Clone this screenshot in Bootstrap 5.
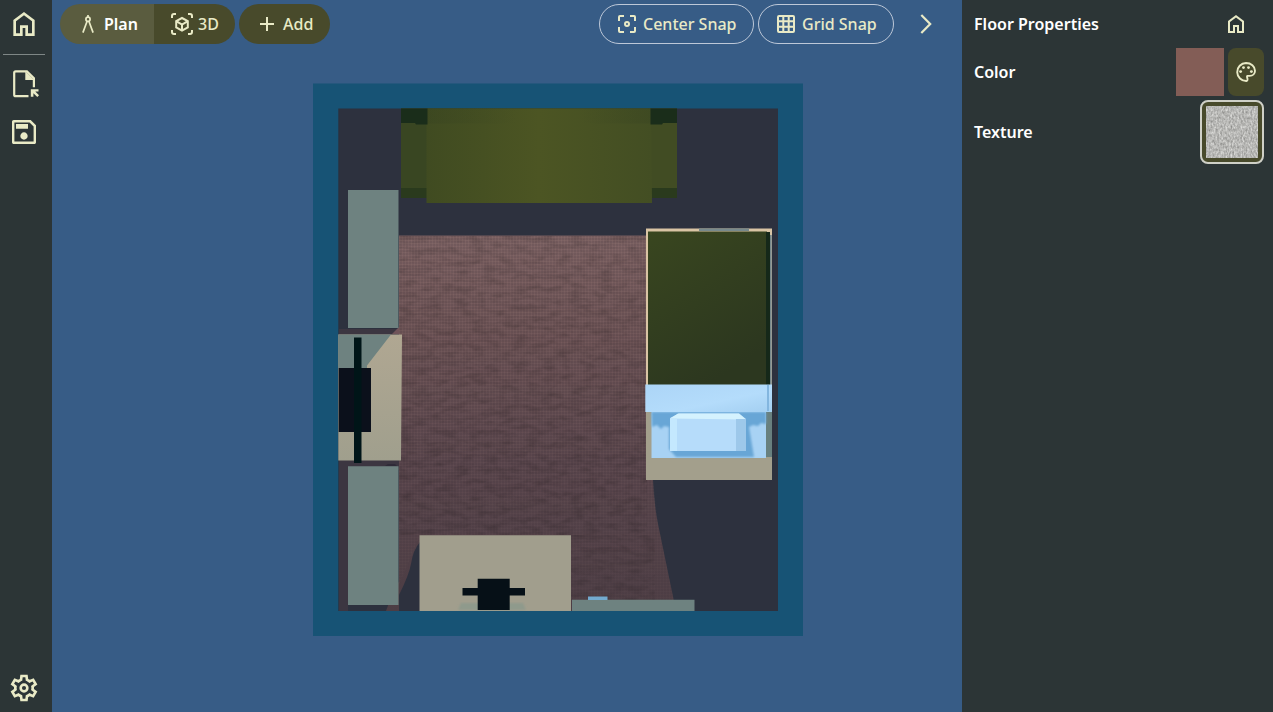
<!DOCTYPE html>
<html lang="en">
<head>
<meta charset="utf-8">
<meta name="viewport" content="width=device-width, initial-scale=1">
<title>Room Planner</title>
<link href="https://cdn.jsdelivr.net/npm/bootstrap@5.3.0/dist/css/bootstrap.min.css" rel="stylesheet">
<style>
  body { font-family: "Noto Sans", "Open Sans", sans-serif; font-size: 16px; font-weight: 500; background: #2c3536; color: #fff; }
  svg { display: block; flex: none; }
  .ic { width: 24px; height: 24px; fill: currentColor; }
  .ic-line { fill: none; stroke: currentColor; stroke-width: 2; }
  .ic-lg { width: 32px; height: 32px; }
  .rail { width: 52px; background: #2c3536; padding: 8px 4px 8px 4px; }
  .rail, .prop-panel { color: #e9eac6; }
  .rail-rule { width: 42px; height: 1px; background: #7f8786; margin: 14px 0 13px -1px; }
  .rail-btn { width: 40px; padding: 0; border: 0; height: 32px; color: #e9eac6; background: none; display: flex; justify-content: center; }
  .stage { background: #375c86; }
  .topbar { height: 48px; padding: 4px 0 4px 8px; }
  .pill { height: 40px; border: 0; border-radius: 20px; padding: 0 16px; color: #e9eac6; background: #484a2b; font-weight: 500; display: flex; align-items: center; gap: 8px; line-height: 24px; white-space: nowrap; }
  .pill-l { border-radius: 20px 0 0 20px; background: #5a5c3f; color: #fff; width: 94px; gap: 4px; font-weight: 600; }
  .pill-l svg { color: #e9eac6; }
  .pill-r { border-radius: 0 20px 20px 0; width: 81px; gap: 4px; }
  .pill-add { width: 91px; margin-left: 4px; gap: 4px; }
  .pill-out { background: none; border: 1px solid #bdc8d8; padding: 0 15px; gap: 4px; }
  .prop-panel { width: 311px; background: #2c3536; padding: 0 9px 0 12px; font-weight: 600; }
  .prop-row { height: 48px; }
  .prop-row span { color: #fff; }
  .swatch { width: 48px; height: 48px; background: #835d56; }
  .pal { width: 36px; height: 48px; border: 0; border-radius: 8px; background: #484a2b; color: #e9eac6; padding: 0 6px; }
  .tex { width: 64px; height: 64px; border: 2px solid #cfd0c7; border-radius: 8px; background: #484a2b; padding: 4px; }
</style>
</head>
<body class="vh-100 overflow-hidden d-flex">
<nav class="rail d-flex flex-column">
  <button class="rail-btn" aria-label="Home"><svg class="ic ic-lg" viewBox="0 -960 960 960"><path d="M240-200h120v-240h240v240h120v-360L480-740 240-560v360Zm-80 80v-480l320-240 320 240v480H520v-240h-80v240H160Z"/></svg></button>
  <div class="rail-rule"></div>
  <button class="rail-btn" aria-label="Open"><svg class="ic ic-lg" viewBox="0 0 32 32"><path fill="none" stroke="currentColor" stroke-width="2.2" d="M20.500 28.200H7.700a1.500 1.500 0 0 1-1.500-1.500V4.800a1.500 1.500 0 0 1 1.500-1.500h11.200l7 7v9"/><path d="M17.300 3v9h9zM22.800 21.300h7.700v2.300h-3.200l3.700 3.700-1.700 1.700-3.900-3.800v3.600h-2.600z"/></svg></button>
  <button class="rail-btn mt-3" aria-label="Save"><svg class="ic ic-lg" viewBox="0 -960 960 960"><path d="M840-680v510q0 20-15 35t-35 15H170q-20 0-35-15t-15-35v-620q0-20 15-35t35-15h510l160 160Zm-72 34L646-768H192v576h576v-454ZM480-250q46 0 78-32t32-78q0-46-32-78t-78-32q-46 0-78 32t-32 78q0 46 32 78t78 32ZM240-580h360v-140H240v140Z"/></svg></button>
  <button class="rail-btn mt-auto" aria-label="Settings"><svg class="ic ic-lg" viewBox="0 -960 960 960"><path d="m370-80-16-128q-13-5-24.5-12T307-235l-119 50L78-375l103-78q-1-7-1-13.5v-27q0-6.5 1-13.5L78-585l110-190 119 50q11-8 23-15t24-12l16-128h220l16 128q13 5 24.5 12t22.5 15l119-50 110 190-103 78q1 7 1 13.5v27q0 6.5-2 13.5l103 78-110 190-118-50q-11 8-23 15t-24 12L590-80H370Zm70-80h79l14-106q31-8 57.500-23.500T639-327l99 41 39-68-86-65q5-14 7-29.500t2-31.500q0-16-2-31.500t-7-29.500l86-65-39-68-99 42q-22-23-48.500-38.500T533-694l-13-106h-79l-14 106q-31 8-57.500 23.500T321-633l-99-41-39 68 86 64q-5 15-7 30t-2 32q0 16 2 31t7 30l-86 65 39 68 99-42q22 23 48.500 38.500T427-266l13 106Z"/><circle cx="480" cy="-480" r="100" fill="none" stroke="currentColor" stroke-width="78"/></svg></button>
</nav>

<main class="stage flex-grow-1 d-flex flex-column">
  <header class="topbar d-flex align-items-center">
    <button class="pill pill-l"><svg class="ic ic-line" viewBox="0 0 24 24" style="stroke-width:1.7"><circle cx="12" cy="7.2" r="2.1"/><path d="M12 3v2.300M11.100 9.200 6.900 20.600M12.900 9.200l4.200 11.400"/></svg><span>Plan</span></button>
    <button class="pill pill-r"><svg class="ic ic-line" viewBox="0 0 24 24"><path d="M2 6V4a2 2 0 0 1 2-2h2M18 2h2a2 2 0 0 1 2 2v2M22 18v2a2 2 0 0 1-2 2h-2M6 22H4a2 2 0 0 1-2-2v-2M12 6l5.800 3.200v6.200L12 18.700l-5.800-3.300V9.200zM6.200 9.200 12 12.500l5.800-3.300M12 12.500v6.200"/></svg><span>3D</span></button>
    <button class="pill pill-add"><svg class="ic ic-line" viewBox="0 0 24 24"><path d="M12 5v14M5 12h14"/></svg><span>Add</span></button>
    <button class="pill pill-out ms-auto me-1" style="width:155px"><svg class="ic ic-line" viewBox="0 0 24 24"><circle cx="12" cy="12" r="2"/><path d="M4 9V5a1 1 0 0 1 1-1h4M15 4h4a1 1 0 0 1 1 1v4M20 15v4a1 1 0 0 1-1 1h-4M9 20H5a1 1 0 0 1-1-1v-4"/></svg><span>Center Snap</span></button>
    <button class="pill pill-out" style="width:136px"><svg class="ic ic-line" viewBox="0 0 24 24"><rect x="4" y="4" width="16" height="16" rx="1"/><path d="M9.300 4v16M14.700 4v16M4 9.300h16M4 14.700h16"/></svg><span>Grid Snap</span></button>
    <button class="btn border-0 p-0" aria-label="More" style="margin:0 24px 0 20px;color:#e9eac6"><svg class="ic" viewBox="0 0 24 24"><path fill="none" stroke="currentColor" stroke-width="2.2" d="M7.300 3l8.900 9-8.900 9"/></svg></button>
  </header>

  <svg width="910" height="664" viewBox="52 48 910 664" role="img" aria-label="Floor plan">
    <defs>
      <linearGradient id="rug" x1="0" y1="0" x2="0" y2="1"><stop offset="0" stop-color="#745b5d"/><stop offset=".25" stop-color="#674f52"/><stop offset=".6" stop-color="#56434a"/><stop offset="1" stop-color="#4c3d44"/></linearGradient>
      <linearGradient id="sofa"><stop offset="0" stop-color="#404b21"/><stop offset=".5" stop-color="#4c5523"/><stop offset="1" stop-color="#434e23"/></linearGradient>
      <linearGradient id="blanket" x1="0" y1="0" x2=".5" y2="1"><stop offset="0" stop-color="#39461f"/><stop offset="1" stop-color="#2c371f"/></linearGradient>
      <linearGradient id="desk" x1="0" y1="0" x2="0" y2="1"><stop offset="0" stop-color="#b0a792"/><stop offset="1" stop-color="#a09f8d"/></linearGradient>
      <linearGradient id="sheet" x1="0" y1="0" x2="1" y2="1"><stop offset="0" stop-color="#acd5f7"/><stop offset=".6" stop-color="#b4dcfb"/><stop offset="1" stop-color="#a3cff1"/></linearGradient>
      <linearGradient id="armTop" x1="0" x2="1"><stop offset="0" stop-color="#344020" stop-opacity=".3"/><stop offset="1" stop-color="#344020" stop-opacity="0"/></linearGradient>
      <linearGradient id="armTopR" x1="1" x2="0"><stop offset="0" stop-color="#344020" stop-opacity=".3"/><stop offset="1" stop-color="#344020" stop-opacity="0"/></linearGradient>
      <filter id="weave" x="0" y="0" width="100%" height="100%"><feTurbulence type="fractalNoise" baseFrequency=".07 .16" numOctaves="3" seed="5"/><feColorMatrix values="0 0 0 0 0  0 0 0 0 0  0 0 0 0 0  1.8 0 0 0 -.72"/></filter>
      <pattern id="thread" width="3" height="3" patternUnits="userSpaceOnUse"><path d="M0 .5h3M.5 0v3" stroke="#c39c98" stroke-opacity=".1"/></pattern>
      <linearGradient id="fade" x1="0" y1="0" x2="0" y2="1"><stop offset="0" stop-color="#fff"/><stop offset="1" stop-color="#333"/></linearGradient>
      <mask id="fadeMask"><rect x="338" y="230" width="340" height="381" fill="url(#fade)"/></mask>
      <filter id="soft"><feGaussianBlur stdDeviation=".9"/></filter>
    </defs>
    <!-- walls and shaded floor -->
    <path fill="#175375" d="M313 83.500h490V636H313z"/>
    <path fill="#2d313e" d="M338.300 108.500H778V611H338.300z"/>
    <!-- lit floor -->
    <path fill="#453944" d="M339 329h62v141h-53v141h-9z" opacity=".65"/>
    <path fill="url(#rug)" d="M399 235.500h248V480h6q1 24 5 44l18 87H386q8-23 18-38 6-15 16-38V611h-16l-5-6z"/>
    <path fill="#2d313e" d="M420 542q-7 8-9 22-2 11-12 31v16h21z"/>
    <g mask="url(#fadeMask)"><path fill="url(#thread)" d="M399 236h248v244h6l5 44 16 76H571v-65H420l-21 50z"/></g>
    <svg x="399" y="236" width="248" height="299" overflow="hidden"><rect width="248" height="299" filter="url(#weave)" opacity=".18"/></svg>
    <svg x="571" y="535" width="84" height="65" overflow="hidden"><rect width="84" height="65" filter="url(#weave)" opacity=".15"/></svg>
    <path fill="#70545a" d="m399 327-7 7h7z"/>
    <!-- sofa -->
    <path fill="#394622" d="M401 108.500h276V198H401z"/>
    <path fill="#2a3a1d" d="M401 188h26v10h-26zM651 188h26v10h-26z"/>
    <path fill="#414c23" d="M651 123h26v65h-26z"/>
    <path fill="url(#sofa)" d="M426.500 108.500H651l1 94.500H426.500z"/>
    <path fill="url(#armTop)" d="M427 108.500h90v15h-90z"/>
    <path fill="url(#armTopR)" d="M581 108.500h70v15h-70z"/>
    <path fill="#1a2d1a" d="M401 108.500h26.500v16H416l-1-1.500h-14zM650.500 108.500H677V123h-14l-1 1.500h-11.500z"/>
    <!-- shelves -->
    <path fill="#6e8280" d="M348 190h50.500v138H348zM348 466.300h50.500V605H348zM572 599.700h122.500V611H572z"/>
    <path fill="#2f2b38" d="m385 466 3-2 7 0 2 2z"/>
    <!-- side desk and chair -->
    <path fill="url(#desk)" d="M338.300 334.500H402l-1 126h-62.700z"/>
    <path fill="#6e8280" d="M338.300 334.500H391l-24 31v3h-28.700z"/>
    <path fill="#0b101b" d="M338.700 368H371v64h-32.300z"/>
    <path fill="#001518" d="M354 337.500h7.500V463H354z"/>
    <!-- bed -->
    <path fill="#d9c4a4" d="M646 228.500h126V385H646z"/>
    <path fill="#78898c" d="M699 228.500h50v2.500h-50zM770 235h1.700v150H770z"/>
    <path fill="url(#blanket)" d="M648 231.500h119V385H648z"/>
    <path fill="#152819" d="M766 232h4v153h-4z"/>
    <path fill="#a39f8c" d="M646 411h126v69H646z"/>
    <path fill="#68807f" d="M766 412h6v45h-6z"/>
    <path fill="#a8d2f4" d="M651.500 411H766v47H651.500z"/>
    <path fill="#67a6d6" filter="url(#soft)" d="M651.500 412H766v12l-5-1-3 3-5-1-4 2 5 30h-78l-7-8v-22l-5-1-3 3-4-4-5 2z"/>
    <path fill="#b6dcfa" d="m670 418 9-4.500h60l7 5.500v32h-76z"/>
    <path fill="#d4f2fe" d="m670 418.500 8-5h61l7 6z"/>
    <path fill="#c4e8fe" d="M670 419h7v32h-7z"/>
    <path fill="#9dc8ea" d="M736 419h10v32h-10z"/>
    <path fill="url(#sheet)" d="M645.300 384.500H772V412H645.300z"/>
    <path fill="#83b6df" d="M767 385h2v26h-2z"/>
    <!-- lower desk, chair and book -->
    <path fill="#a19e8d" d="M419.500 535.300H571V611H419.500z"/>
    <path fill="#8f9a8c" filter="url(#soft)" d="M461 603h62l3 7h-68z"/>
    <path fill="#061017" d="M477.700 578.700h32V610h-32zM462.500 588h62.500v7.500h-62.500z"/>
    <path fill="#73aacf" d="M588 596.500h19.500v3.500H588z"/>
  </svg>
</main>

<aside class="prop-panel">
  <div class="prop-row d-flex align-items-center justify-content-between"><span>Floor Properties</span><svg class="ic" style="margin-right:16px" viewBox="0 -960 960 960"><path d="M240-200h120v-240h240v240h120v-360L480-740 240-560v360Zm-80 80v-480l320-240 320 240v480H520v-240h-80v240H160Z"/></svg></div>
  <div class="prop-row d-flex align-items-center gap-1"><span class="me-auto">Color</span><div class="swatch"></div>
    <button class="pal" aria-label="Palette"><svg class="ic" viewBox="0 0 24 24"><path fill="none" stroke="currentColor" stroke-width="1.9" stroke-linejoin="round" d="M12.400 21A9 9 0 1 1 12 3c5 0 9 3.300 9 7.700 0 3-2.200 5.200-5.200 5.200h-2.600c-.8 1.500.9 2.400.2 4.300q-.3.700-1 .8z"/><circle cx="6.600" cy="11.600" r="1.450"/><circle cx="9.500" cy="7.600" r="1.450"/><circle cx="14.500" cy="7.600" r="1.450"/><circle cx="17.400" cy="11.600" r="1.450"/></svg></button></div>
  <div class="d-flex align-items-center justify-content-between mt-1"><span class="text-white">Texture</span>
    <div class="tex"><svg width="52" height="52"><defs><filter id="cloth" x="0" y="0" width="100%" height="100%" color-interpolation-filters="sRGB"><feTurbulence type="fractalNoise" baseFrequency=".6 .35" numOctaves="3" seed="3"/><feColorMatrix values=".42 0 0 0 .51  .42 0 0 0 .51  .42 0 0 0 .5  0 0 0 0 1"/></filter></defs><rect width="52" height="52" filter="url(#cloth)"/></svg></div></div>
</aside>
<script src="https://cdn.jsdelivr.net/npm/bootstrap@5.3.0/dist/js/bootstrap.bundle.min.js"></script>
</body>
</html>
